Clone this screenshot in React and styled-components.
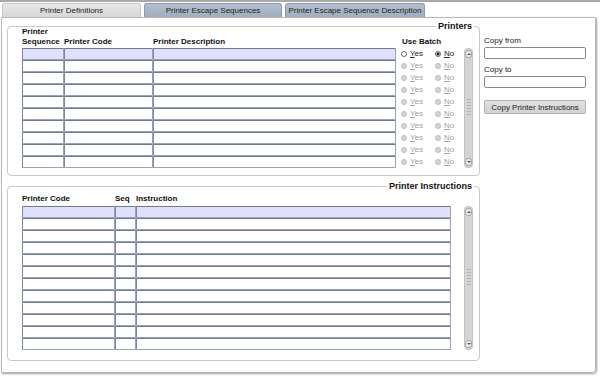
import React from 'react';
import styled, { createGlobalStyle } from 'styled-components';

const PRINTER_ROWS = 10;
const INSTRUCTION_ROWS = 12;

const GlobalStyle = createGlobalStyle`
  body {
    margin: 0;
    background: #fff;
    font-family: "Liberation Sans", Arial, sans-serif;
    font-size: 8px;
    color: #1e1e1e;
  }
`;

const Screen = styled.div`
  width: 600px;
  height: 376px;
  overflow: hidden;
`;

const TopStrip = styled.div`
  height: 2px;
  background: #a9a9a9;
`;

const TabBar = styled.div`
  display: flex;
  gap: 3px;
  padding: 1px 0 0 2px;
  height: 14px;
`;

const Tab = styled.div`
  width: ${(p) => p.$w}px;
  height: 14px;
  box-sizing: border-box;
  border: 1px solid ${(p) => (p.$active ? '#c6c6c6' : '#8d99ab')};
  border-bottom: none;
  border-radius: 3px 3px 0 0;
  background: ${(p) => (p.$active
    ? 'linear-gradient(#e8e8e8, #d6d6d6)'
    : 'linear-gradient(#b4c0cf, #a1adbe)')};
  display: flex;
  align-items: center;
  justify-content: center;
  color: #222;
`;

const Panel = styled.div`
  margin-left: 1px;
  width: 595px;
  height: 356px;
  box-sizing: border-box;
  border: 1px solid #b9b9b9;
  border-radius: 0 0 4px 0;
  box-shadow: 1px 1px 2px #a0a0a0;
  display: flex;
  gap: 4px;
  padding: 8px 0 0 5px;
`;

const LeftCol = styled.div`
  display: flex;
  flex-direction: column;
  width: 473px;
`;

const GroupBox = styled.div`
  position: relative;
  border: 1px solid #c8c8c8;
  border-radius: 4px;
  padding: ${(p) => p.$pad};
  margin-top: ${(p) => p.$top || 0}px;
`;

const Legend = styled.span`
  position: absolute;
  top: -6px;
  right: 5px;
  padding: 0 2px;
  background: #fff;
  font-weight: bold;
  font-size: 9px;
  line-height: 11px;
  color: #111;
`;

const HeaderRow = styled.div`
  display: grid;
  grid-template-columns: ${(p) => p.$cols};
  align-items: end;
  height: ${(p) => p.$h}px;
  margin-bottom: ${(p) => p.$mb}px;
`;

const HeaderCell = styled.div`
  font-weight: bold;
  line-height: 10px;
  padding-left: ${(p) => p.$pl || 0}px;
  color: #111;
  white-space: nowrap;
`;

const Body = styled.div`
  display: flex;
  gap: ${(p) => p.$gap}px;
`;

const Rows = styled.div`
  display: flex;
  flex-direction: column;
`;

const Row = styled.div`
  display: grid;
  grid-template-columns: ${(p) => p.$cols};
  height: 12px;
`;

const Cell = styled.div`
  box-sizing: border-box;
  height: 12px;
  border: 1px solid #9aa3b6;
  border-top-color: #6f7a90;
  border-left-color: #7c879c;
  border-radius: 1px;
  background: ${(p) => (p.$current ? '#dfe0fb' : '#fff')};
`;

const RadioGroup = styled.div`
  display: grid;
  grid-template-columns: 34px 34px;
  padding-left: 5px;
  align-items: center;
`;

const RadioOption = styled.label`
  display: flex;
  align-items: center;
  gap: 3px;
  line-height: 10px;
  color: ${(p) => (p.$disabled ? '#a2a2a2' : '#222')};
  u { text-decoration: underline; }
`;

const RadioDot = styled.span`
  width: 6px;
  height: 6px;
  box-sizing: border-box;
  border-radius: 50%;
  border: 1px solid ${(p) => (p.$disabled ? '#bdbdbd' : '#6a6a6a')};
  background: ${(p) => {
    if (p.$checked) return 'radial-gradient(circle, #222 45%, #cfcfcf 60%)';
    if (p.$disabled) return '#d6d6d6';
    return '#fff';
  }};
`;

const ScrollTrack = styled.div`
  width: 9px;
  height: ${(p) => p.$h}px;
  box-sizing: border-box;
  border: 1px solid #c3c3c3;
  border-radius: 4px;
  background: #d4d4d4;
  display: flex;
  flex-direction: column;
  align-items: center;
  justify-content: space-between;
  padding: 1px 0;
`;

const ScrollBtn = styled.div`
  width: 7px;
  height: 8px;
  box-sizing: border-box;
  border: 1px solid #a6a6a6;
  border-radius: 3px;
  background: #ececec;
  display: flex;
  align-items: center;
  justify-content: center;
  &::after {
    content: '';
    border-left: 2px solid transparent;
    border-right: 2px solid transparent;
    ${(p) => (p.$down ? 'border-top: 2px solid #555;' : 'border-bottom: 2px solid #555;')}
  }
`;

const Grip = styled.div`
  width: 4px;
  height: 18px;
  background: repeating-linear-gradient(#b4b4b4 0 1px, transparent 1px 3px);
`;

const RightCol = styled.div`
  display: flex;
  flex-direction: column;
  width: 102px;
  padding-top: 10px;
`;

const FieldLabel = styled.div`
  line-height: 10px;
  margin-top: ${(p) => p.$mt || 0}px;
  color: #222;
`;

const TextBox = styled.div`
  height: 12px;
  margin-top: 1px;
  box-sizing: border-box;
  border: 1px solid #7f8a9a;
  border-radius: 2px;
  background: #fff;
`;

const ActionButton = styled.button`
  margin-top: 12px;
  height: 14px;
  width: 102px;
  padding: 0;
  box-sizing: border-box;
  border: 1px solid #b2b2b2;
  border-radius: 2px;
  background: linear-gradient(#e2e2e2, #d2d2d2);
  font-family: "Liberation Sans", Arial, sans-serif;
  font-size: 8px;
  color: #222;
`;

const Radio = ({ label, accel, checked, disabled }) => (
  <RadioOption $disabled={disabled}>
    <RadioDot $checked={checked} $disabled={disabled} />
    <span><u>{accel}</u>{label}</span>
  </RadioOption>
);

const Scrollbar = ({ height }) => (
  <ScrollTrack $h={height}>
    <ScrollBtn />
    <Grip />
    <ScrollBtn $down />
  </ScrollTrack>
);

const PRINTER_COLS = '42px 89px 243px 68px';
const INSTR_COLS = '93px 21px 315px';

const App = () => (
  <Screen>
    <GlobalStyle />
    <TopStrip />
    <TabBar>
      <Tab $w={139} $active>Printer Definitions</Tab>
      <Tab $w={138}>Printer Escape Sequences</Tab>
      <Tab $w={140}>Printer Escape Sequence Description</Tab>
    </TabBar>

    <Panel>
      <LeftCol>
        {/* Printers */}
        <GroupBox $pad="0 6px 7px 14px">
          <Legend>Printers</Legend>
          <HeaderRow $cols={PRINTER_COLS} $h={20} $mb={1}>
            <HeaderCell>Printer<br />Sequence</HeaderCell>
            <HeaderCell>Printer Code</HeaderCell>
            <HeaderCell>Printer Description</HeaderCell>
            <HeaderCell $pl={6}>Use Batch</HeaderCell>
          </HeaderRow>
          <Body $gap={0}>
            <Rows>
              {Array.from({ length: PRINTER_ROWS }).map((_, i) => (
                <Row key={i} $cols={PRINTER_COLS}>
                  <Cell $current={i === 0} />
                  <Cell $current={i === 0} />
                  <Cell $current={i === 0} />
                  <RadioGroup>
                    <Radio accel="Y" label="es" disabled={i > 0} />
                    <Radio accel="N" label="o" checked={i === 0} disabled={i > 0} />
                  </RadioGroup>
                </Row>
              ))}
            </Rows>
            <Scrollbar height={120} />
          </Body>
        </GroupBox>

        {/* Printer Instructions */}
        <GroupBox $pad="7px 6px 10px 14px" $top={10}>
          <Legend>Printer Instructions</Legend>
          <HeaderRow $cols={INSTR_COLS} $h={10} $mb={2}>
            <HeaderCell>Printer Code</HeaderCell>
            <HeaderCell>Seq</HeaderCell>
            <HeaderCell>Instruction</HeaderCell>
          </HeaderRow>
          <Body $gap={13}>
            <Rows>
              {Array.from({ length: INSTRUCTION_ROWS }).map((_, i) => (
                <Row key={i} $cols={INSTR_COLS}>
                  <Cell $current={i === 0} />
                  <Cell $current={i === 0} />
                  <Cell $current={i === 0} />
                </Row>
              ))}
            </Rows>
            <Scrollbar height={144} />
          </Body>
        </GroupBox>
      </LeftCol>

      <RightCol>
        <FieldLabel>Copy from</FieldLabel>
        <TextBox />
        <FieldLabel $mt={6}>Copy to</FieldLabel>
        <TextBox />
        <ActionButton type="button">Copy Printer Instructions</ActionButton>
      </RightCol>
    </Panel>
  </Screen>
);

export default App;
